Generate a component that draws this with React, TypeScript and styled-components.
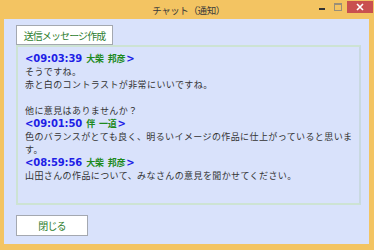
import styled, { createGlobalStyle } from "styled-components";

const GlobalStyle = createGlobalStyle`
  html, body {
    margin: 0;
    padding: 0;
    background: #ffffff;
  }
  body {
    font-family: "Noto Sans CJK JP", "Noto Sans", sans-serif;
  }
`;

type Message = {
  time: string;
  name: string;
  lines: string[];
};

const messages: Message[] = [
  {
    time: "09:03:39",
    name: "大柴 邦彦",
    lines: ["そうですね。", "赤と白のコントラストが非常にいいですね。", "", "他に意見はありませんか？"],
  },
  {
    time: "09:01:50",
    name: "伴 一道",
    lines: ["色のバランスがとても良く、明るいイメージの作品に仕上がっていると思います。"],
  },
  {
    time: "08:59:56",
    name: "大柴 邦彦",
    lines: ["山田さんの作品について、みなさんの意見を聞かせてください。"],
  },
];

export default function App() {
  return (
    <>
      <GlobalStyle />
      <StyledWindow>
        <StyledTitleBar>
          <StyledTitle>チャット（通知）</StyledTitle>
          <StyledControls>
            <StyledMinimize />
            <StyledMaximize />
            <StyledClose>
              <svg width="8" height="8" viewBox="0 0 8 8">
                <path d="M1 1 L7 7 M7 1 L1 7" stroke="#ffffff" strokeWidth="1.6" />
              </svg>
            </StyledClose>
          </StyledControls>
        </StyledTitleBar>
        <StyledClient>
          <StyledButton $width={97} $height={20}>送信メッセージ作成</StyledButton>
          <StyledGroup>
            {messages.map((m) => (
              <StyledMessage key={m.time}>
                <StyledHeader>
                  <StyledTime>&lt;{m.time}</StyledTime>
                  <StyledName>{m.name}</StyledName>
                  <StyledTime>&gt;</StyledTime>
                </StyledHeader>
                {m.lines.map((line, i) => (
                  <StyledLine key={i}>{line || "\u00a0"}</StyledLine>
                ))}
              </StyledMessage>
            ))}
          </StyledGroup>
          <StyledFooter>
            <StyledButton $width={72} $height={21}>閉じる</StyledButton>
          </StyledFooter>
        </StyledClient>
      </StyledWindow>
    </>
  );
}

const StyledWindow = styled.div`
  width: 374px;
  height: 250px;
  box-sizing: border-box;
  background: #f3c462;
  padding: 0 5px 6px 4px;
  display: flex;
  flex-direction: column;
`;

const StyledTitleBar = styled.div`
  height: 19px;
  position: relative;
  display: flex;
  align-items: center;
  justify-content: center;
`;

const StyledTitle = styled.div`
  font-size: 9.5px;
  letter-spacing: -0.4px;
  color: #3a3a3a;
  margin-left: 4px;
`;

const StyledControls = styled.div`
  position: absolute;
  right: -4px;
  top: 0;
  display: flex;
  align-items: flex-start;
`;

const StyledMinimize = styled.div`
  width: 6px;
  height: 2px;
  background: #333;
  margin: 8px 9px 0 0;
`;

const StyledMaximize = styled.div`
  width: 6px;
  height: 5px;
  border: 1px solid #9a8f78;
  border-top-width: 2px;
  margin: 3px 5px 0 0;
`;

const StyledClose = styled.div`
  width: 26px;
  height: 12px;
  margin-top: 1px;
  background: #c9504f;
  display: flex;
  align-items: center;
  justify-content: center;
`;

const StyledClient = styled.div`
  flex: 1;
  background: #d9e2fb;
  padding: 6px 8px 0 12px;
  display: flex;
  flex-direction: column;
`;

const StyledButton = styled.div<{ $width: number; $height: number }>`
  width: ${({ $width }) => $width}px;
  height: ${({ $height }) => $height}px;
  box-sizing: border-box;
  background: #ffffff;
  border: 1px solid #a4a8b0;
  color: #2e7d2e;
  font-size: 10px;
  letter-spacing: -0.9px;
  display: flex;
  align-items: center;
  justify-content: center;
`;

const StyledGroup = styled.div`
  height: 160px;
  box-sizing: border-box;
  border: 2px solid #cde3d3;
  border-right-color: #c9d9e0;
  padding: 5px 4px 0 7px;
`;

const StyledMessage = styled.div`
  display: flex;
  flex-direction: column;
`;

const StyledHeader = styled.div`
  display: flex;
  align-items: baseline;
  height: 13px;
  line-height: 13px;
  font-weight: bold;
`;

const StyledTime = styled.span`
  font-family: "DejaVu Sans", "Liberation Sans", sans-serif;
  font-size: 10px;
  letter-spacing: -0.1px;
  color: #1e1ee6;
`;

const StyledName = styled.span`
  font-size: 9px;
  color: #1d8a1d;
  margin: 0 1px 0 4px;
  letter-spacing: -0.2px;
  word-spacing: 2px;
`;

const StyledLine = styled.div`
  font-size: 9px;
  line-height: 13px;
  letter-spacing: 0.4px;
  color: #333333;
`;

const StyledFooter = styled.div`
  margin-top: 10px;
  display: flex;
`;
